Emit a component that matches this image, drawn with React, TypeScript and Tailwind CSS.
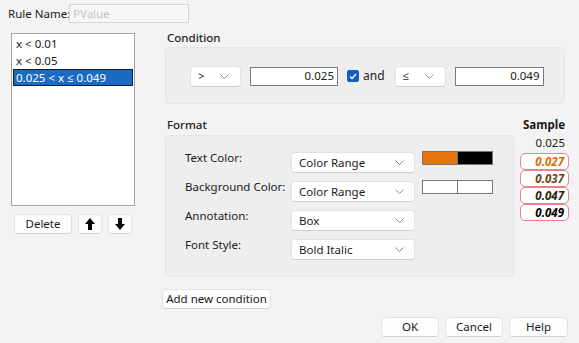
import React from "react";

const font = { fontFamily: '"Noto Sans", "Open Sans", sans-serif' };

function Chevron() {
    return (
        <svg width="9" height="5" viewBox="0 0 9 5" className="shrink-0">
            <path d="M0.5 0.5 L4.5 4.5 L8.5 0.5" fill="none" stroke="#8a8a8a" strokeWidth="1" />
        </svg>
    );
}

function Combo({ label, w, pr = "pr-[10px]" }: { label: string; w: string; pr?: string }) {
    return (
        <div
            className={`${w} h-[21px] flex items-center justify-between pl-[7px] ${pr} bg-white border border-[#e2e2e2] border-b-[#cfcfcf] rounded-[4px] text-[#1a1a1a]`}
        >
            <span className="leading-none whitespace-nowrap">{label}</span>
            <Chevron />
        </div>
    );
}

function Btn({ children, w }: { children: React.ReactNode; w: string }) {
    return (
        <div
            className={`${w} h-[20px] flex items-center justify-center bg-[#fdfdfd] border border-[#e3e3e3] border-b-[#d2d2d2] rounded-[4px] text-[#1a1a1a] whitespace-nowrap`}
        >
            {children}
        </div>
    );
}

function Arrow({ up }: { up: boolean }) {
    return (
        <svg width="10" height="12" viewBox="0 0 10 12" className={up ? "" : "rotate-180"}>
            <path d="M5 0 L10 6 L7 6 L7 12 L3 12 L3 6 L0 6 Z" fill="#000" />
        </svg>
    );
}

const samples = [
    { v: "0.027", c: "text-[#d86c00]" },
    { v: "0.037", c: "text-[#6a4412]" },
    { v: "0.047", c: "text-[#2a1e0a]" },
    { v: "0.049", c: "text-black" },
];

const formatRows = [
    { label: "Text Color:", value: "Color Range", swatch: "orange" },
    { label: "Background Color:", value: "Color Range", swatch: "white" },
    { label: "Annotation:", value: "Box", swatch: "" },
    { label: "Font Style:", value: "Bold Italic", swatch: "" },
];

export default function App() {
    return (
        <div style={font} className="w-[579px] h-[343px] bg-[#f3f3f3] text-[11.5px] text-[#1a1a1a] overflow-hidden">
            {/* Rule name */}
            <div className="flex items-center pl-[8px] pt-[4px] h-[23px]">
                <span className="w-[61px] whitespace-nowrap">Rule Name:</span>
                <div className="w-[120px] h-[19px] border border-[#d5d5d5] bg-[#f7f7f7] flex items-center pl-[3px] text-[#c4c4c4]">
                    PValue
                </div>
            </div>

            <div className="flex mt-[10px]">
                {/* Left: rule list */}
                <div className="ml-[11px] w-[124px]">
                    <div className="h-[173px] bg-white border border-[#a3a3a3] pt-[1px] px-[1px] whitespace-nowrap">
                        <div className="h-[17px] leading-[17px] pl-[3px]">x &lt; 0.01</div>
                        <div className="h-[17px] leading-[17px] pl-[3px]">x &lt; 0.05</div>
                        <div className="h-[17px] leading-[15px] pl-[2px] bg-[#1b6bc2] border border-[#0b1d33] text-white">
                            0.025 &lt; x ≤ 0.049
                        </div>
                    </div>
                    <div className="flex mt-[8px] ml-[3px] gap-[6px]">
                        <Btn w="w-[58px]">Delete</Btn>
                        <Btn w="w-[24px]">
                            <Arrow up />
                        </Btn>
                        <Btn w="w-[24px]">
                            <Arrow up={false} />
                        </Btn>
                    </div>
                </div>

                {/* Right */}
                <div className="ml-[30px] -mt-[2px]">
                    <div className="h-[16px] leading-[14px] pl-[2px] font-medium text-[#222]">Condition</div>
                    <div className="w-[400px] h-[57px] bg-[#eeeeee] border border-[#e4e4e4] rounded-[5px] flex items-center pl-[24px] pt-[1px]">
                        <Combo label=">" w="w-[51px]" pr="pr-[11px]" />
                        <div className="ml-[9px] w-[88px] h-[19px] bg-white border border-[#7a7a7a] flex items-center justify-end pr-[3px]">
                            0.025
                        </div>
                        <div className="ml-[9px] w-[12px] h-[12px] rounded-[2px] bg-[#1460c0] flex items-center justify-center">
                            <svg width="8" height="7" viewBox="0 0 8 7">
                                <path d="M1 3.5 L3 5.5 L7 1" fill="none" stroke="#fff" strokeWidth="1.3" />
                            </svg>
                        </div>
                        <span className="ml-[4px] text-[12px]">and</span>
                        <div className="ml-[10px]">
                            <Combo label="≤" w="w-[51px]" pr="pr-[11px]" />
                        </div>
                        <div className="ml-[9px] w-[89px] h-[19px] bg-white border border-[#7a7a7a] flex items-center justify-end pr-[3px]">
                            0.049
                        </div>
                    </div>

                    <div className="flex">
                        <div>
                            <div className="h-[31px] pt-[14px] leading-[14px] pl-[2px] font-medium text-[#222]">Format</div>
                            <div className="w-[349px] h-[142px] bg-[#eeeeee] border border-[#e4e4e4] rounded-[5px] pt-[16px] pl-[19px] flex flex-col gap-[8px]">
                                {formatRows.map((r) => (
                                    <div key={r.label} className="flex items-start h-[21px]">
                                        <span className="w-[106px] leading-[14px] -mt-[1px] whitespace-nowrap">{r.label}</span>
                                        <Combo label={r.value} w="w-[124px]" />
                                        {r.swatch && (
                                            <div className="ml-[7px] -mt-[1px] w-[71px] h-[14px] flex border border-[#777]">
                                                <div className={`flex-1 ${r.swatch === "orange" ? "bg-[#e47408]" : "bg-white"} border-r border-[#777]`} />
                                                <div className={`flex-1 ${r.swatch === "orange" ? "bg-black" : "bg-white"}`} />
                                            </div>
                                        )}
                                    </div>
                                ))}
                            </div>
                        </div>

                        {/* Sample */}
                        <div className="ml-[6px] w-[49px] pt-[14px]">
                            <div className="h-[17px] leading-[14px] text-right pr-[4px] font-bold">Sample</div>
                            <div className="h-[18px] leading-[16px] text-right pr-[4px]">0.025</div>
                            {samples.map((s) => (
                                <div
                                    key={s.v}
                                    className={`h-[17px] leading-[15px] text-right pr-[4px] bg-white border border-[#ec7f88] rounded-[5px] font-bold italic ${s.c}`}
                                >
                                    {s.v}
                                </div>
                            ))}
                        </div>
                    </div>
                </div>
            </div>

            {/* Bottom */}
            <div className="ml-[162px] mt-[12px] w-fit">
                <Btn w="w-[109px]">Add new condition</Btn>
            </div>
            <div className="flex justify-end gap-[6px] pr-[11px] mt-[8px]">
                <Btn w="w-[58px]">OK</Btn>
                <Btn w="w-[58px]">Cancel</Btn>
                <Btn w="w-[59px]">Help</Btn>
            </div>
        </div>
    );
}
